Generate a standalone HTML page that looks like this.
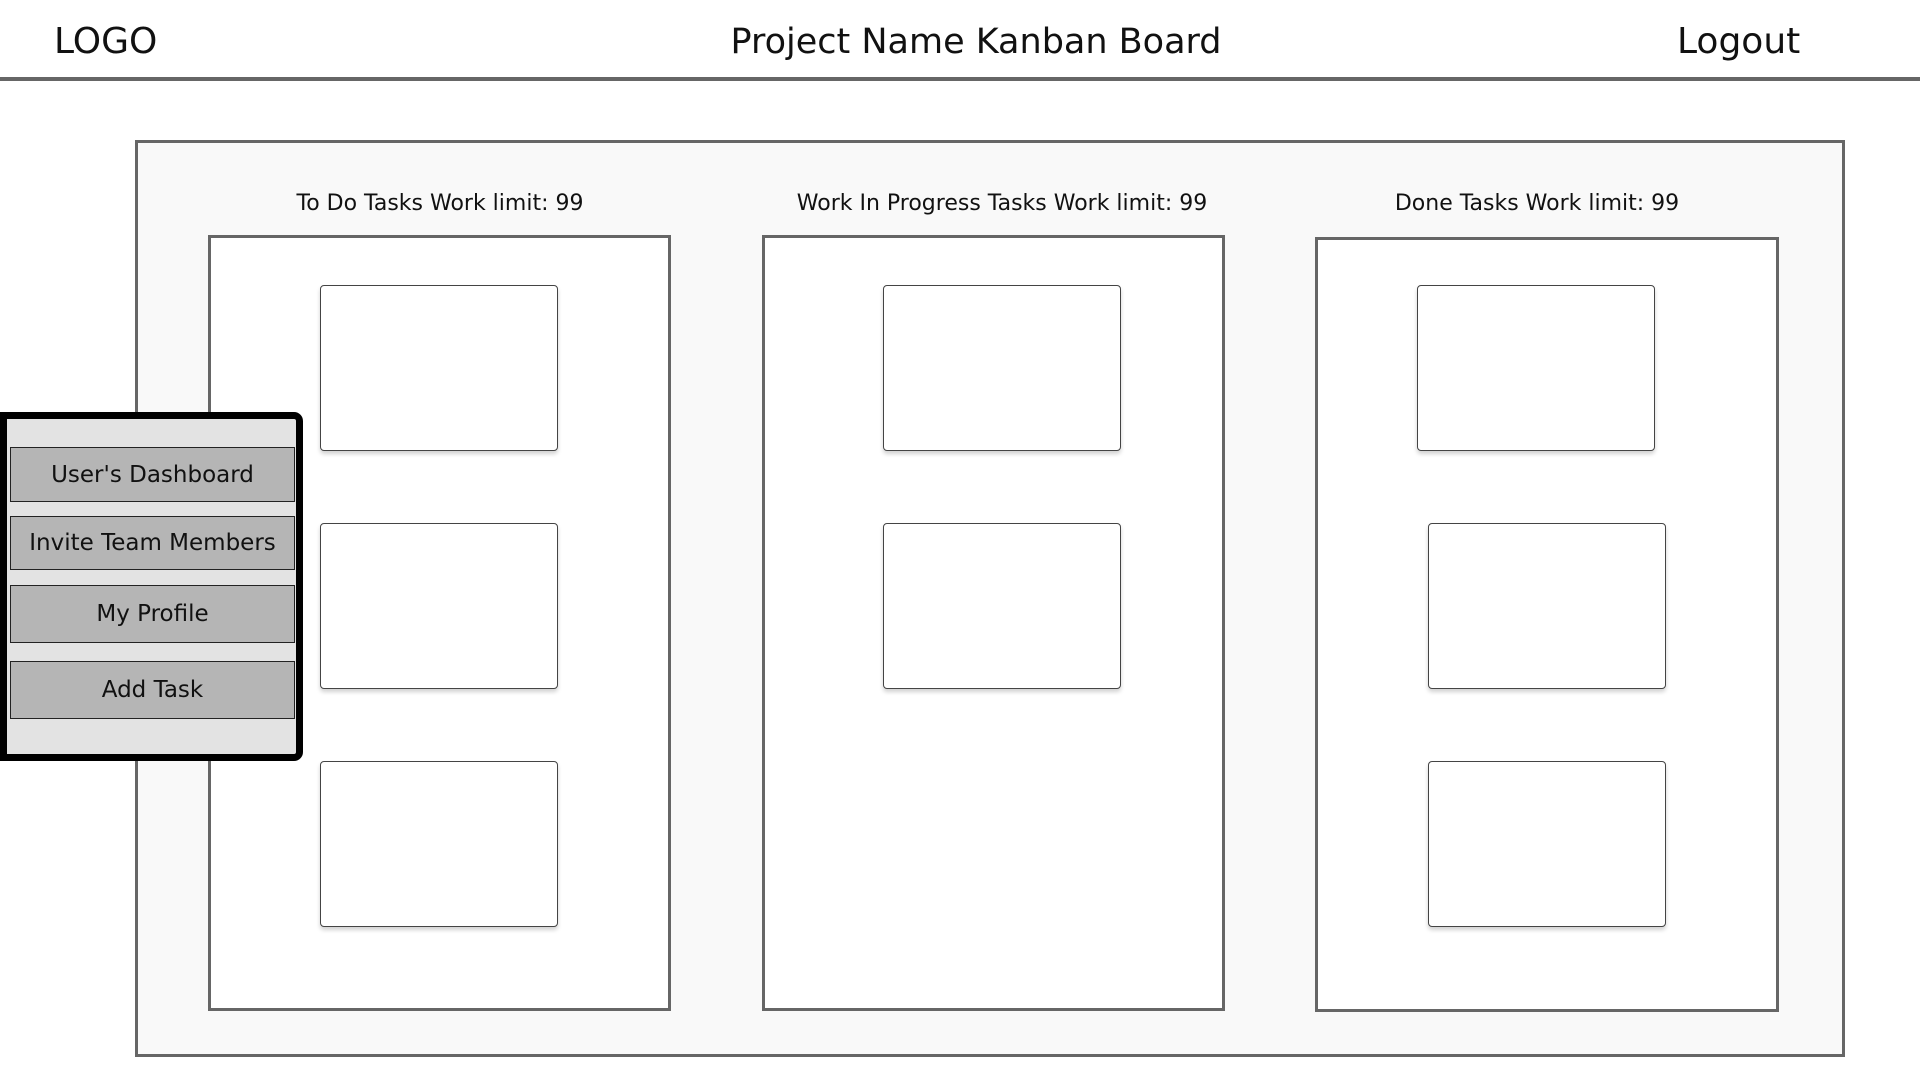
<!DOCTYPE html>
<html><head><meta charset="utf-8"><style>
*{box-sizing:border-box;margin:0;padding:0}
body{width:1920px;height:1080px;background:#fff;position:relative;overflow:hidden;font-family:"DejaVu Sans","Liberation Sans",sans-serif;color:#111}
.abs{position:absolute}
.hdr{font-size:36px;top:17px;line-height:50px}
.line{left:0;width:1920px;top:77px;height:4px;background:#666}
.board{left:135px;top:140px;width:1710px;height:917px;border:3px solid #666;background:#f9f9f9}
.title{top:188px;font-size:22px;line-height:32px;width:600px;text-align:center}
.col{border:3px solid #666;background:#fff}
.card{border:1.5px solid #444;border-radius:4px;background:#fff;box-shadow:0 3px 4px rgba(0,0,0,.18);width:238px;height:166px}
.side{left:0;top:412px;width:303px;height:349px;background:#e3e3e3;border:7px solid #000;border-radius:0 9px 9px 0}
.btn{left:10px;width:285px;background:#b5b5b5;border:1.5px solid #222;font-size:23px;text-align:center;display:flex;align-items:center;justify-content:center;white-space:nowrap}
</style></head><body>
<div class="abs hdr" style="left:54px">LOGO</div>
<div class="abs hdr" style="left:0;width:1952px;text-align:center;font-size:35px">Project Name Kanban Board</div>
<div class="abs hdr" style="left:1677px">Logout</div>
<div class="abs line"></div>
<div class="abs board"></div>
<div class="abs title" style="left:140px">To Do Tasks Work limit: 99</div>
<div class="abs title" style="left:702px">Work In Progress Tasks Work limit: 99</div>
<div class="abs title" style="left:1237px">Done Tasks Work limit: 99</div>
<div class="abs col" style="left:208px;top:235px;width:463px;height:776px"></div>
<div class="abs col" style="left:762px;top:235px;width:463px;height:776px"></div>
<div class="abs col" style="left:1315px;top:237px;width:464px;height:775px"></div>
<div class="abs card" style="left:320px;top:285px"></div>
<div class="abs card" style="left:320px;top:523px"></div>
<div class="abs card" style="left:320px;top:761px"></div>
<div class="abs card" style="left:883px;top:285px"></div>
<div class="abs card" style="left:883px;top:523px"></div>
<div class="abs card" style="left:1417px;top:285px"></div>
<div class="abs card" style="left:1428px;top:523px"></div>
<div class="abs card" style="left:1428px;top:761px"></div>
<div class="abs side"></div>
<div class="abs btn" style="top:447px;height:55px">User's Dashboard</div>
<div class="abs btn" style="top:516px;height:54px">Invite Team Members</div>
<div class="abs btn" style="top:585px;height:58px">My Profile</div>
<div class="abs btn" style="top:661px;height:58px">Add Task</div>
</body></html>
